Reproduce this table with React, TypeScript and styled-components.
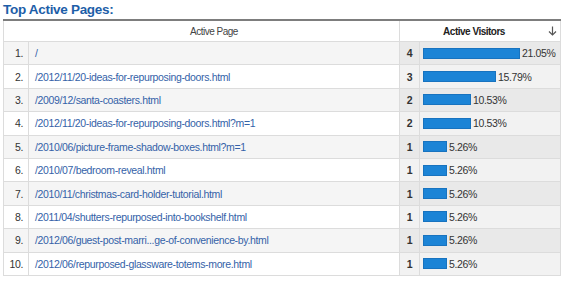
import React from 'react';
import styled, { createGlobalStyle } from 'styled-components';

type PageRow = {
  path: string;
  visitors: number;
  pct: number;
};

const rows: PageRow[] = [
  { path: '/', visitors: 4, pct: 21.05 },
  { path: '/2012/11/20-ideas-for-repurposing-doors.html', visitors: 3, pct: 15.79 },
  { path: '/2009/12/santa-coasters.html', visitors: 2, pct: 10.53 },
  { path: '/2012/11/20-ideas-for-repurposing-doors.html?m=1', visitors: 2, pct: 10.53 },
  { path: '/2010/06/picture-frame-shadow-boxes.html?m=1', visitors: 1, pct: 5.26 },
  { path: '/2010/07/bedroom-reveal.html', visitors: 1, pct: 5.26 },
  { path: '/2010/11/christmas-card-holder-tutorial.html', visitors: 1, pct: 5.26 },
  { path: '/2011/04/shutters-repurposed-into-bookshelf.html', visitors: 1, pct: 5.26 },
  { path: '/2012/06/guest-post-marri...ge-of-convenience-by.html', visitors: 1, pct: 5.26 },
  { path: '/2012/06/repurposed-glassware-totems-more.html', visitors: 1, pct: 5.26 },
];

const GlobalStyle = createGlobalStyle`
  body {
    margin: 0;
    padding: 0 3px;
    background: #fff;
    font-family: "Liberation Sans", Arial, sans-serif;
    color: #333;
  }
`;

const Title = styled.h2`
  margin: 0 0 1px;
  padding-top: 1px;
  font-size: 13.5px;
  line-height: 17px;
  font-weight: bold;
  letter-spacing: -0.3px;
  color: #1d5ea8;
`;

const Table = styled.table`
  width: 557px;
  table-layout: fixed;
  border-collapse: collapse;
  border-top: 2px solid #7d7d7d;
  font-size: 10.5px;
  letter-spacing: -0.35px;
`;

const HeadCell = styled.th<{ $sorted?: boolean }>`
  height: 20px;
  padding: 0;
  font-size: 10px;
  letter-spacing: -0.5px;
  font-weight: ${p => (p.$sorted ? 'bold' : 'normal')};
  color: ${p => (p.$sorted ? '#222' : '#444')};
  background: #fff;
  border: 1px solid #dcdcdc;
  border-top: none;
  text-align: center;
`;

const PageHeadLabel = styled.div`
  padding-left: 25px;
`;

const SortHead = styled.div`
  display: flex;
  align-items: center;
`;

const SortLabel = styled.span`
  flex: 1;
  text-align: center;
`;

const SortArrow = styled.svg`
  width: 9px;
  height: 10px;
  margin-right: 3px;
`;

const Row = styled.tr<{ $odd: boolean }>`
  --page-bg: ${p => (p.$odd ? '#f5f5f5' : '#fff')};
  --metric-bg: ${p => (p.$odd ? '#e9e9e9' : '#f2f2f2')};
`;

const Cell = styled.td`
  height: 22.4px;
  padding: 0;
  border: 1px solid #dcdcdc;
  white-space: nowrap;
  overflow: hidden;
`;

const IndexCell = styled(Cell)`
  background: var(--page-bg);
  text-align: right;
  padding-right: 5px;
  color: #333;
`;

const PathCell = styled(Cell)`
  background: var(--page-bg);
  padding-left: 6px;
  color: #3462a8;
`;

const CountCell = styled(Cell)`
  background: var(--metric-bg);
  text-align: center;
  font-weight: bold;
  color: #333;
`;

const BarCell = styled(Cell)`
  background: var(--metric-bg);
  padding-left: 3px;
`;

const BarWrap = styled.div`
  display: flex;
  align-items: center;
  gap: 2px;
`;

const Bar = styled.div`
  box-sizing: border-box;
  height: 11px;
  background: #1c84d6;
  border: 1px solid #1873bf;
`;

const Pct = styled.span`
  color: #333;
`;

export default function App() {
  return (
    <>
      <GlobalStyle />
      <Title>Top Active Pages:</Title>
      <Table>
        <colgroup>
          <col style={{ width: 25 }} />
          <col style={{ width: 371 }} />
          <col style={{ width: 20 }} />
          <col style={{ width: 141 }} />
        </colgroup>
        <thead>
          <tr>
            <HeadCell colSpan={2}>
              <PageHeadLabel>Active Page</PageHeadLabel>
            </HeadCell>
            <HeadCell colSpan={2} $sorted>
              <SortHead>
                <SortLabel>Active Visitors</SortLabel>
                <SortArrow viewBox="0 0 9 10" fill="none" stroke="#555" strokeWidth="1.2">
                  <path d="M4.5 0.5V9" />
                  <path d="M1 5.5L4.5 9L8 5.5" />
                </SortArrow>
              </SortHead>
            </HeadCell>
          </tr>
        </thead>
        <tbody>
          {rows.map((r, i) => (
            <Row key={i} $odd={i % 2 === 0}>
              <IndexCell>{i + 1}.</IndexCell>
              <PathCell>{r.path}</PathCell>
              <CountCell>{r.visitors}</CountCell>
              <BarCell>
                <BarWrap>
                  <Bar style={{ width: Math.round(r.pct * 4.6) }} />
                  <Pct>{r.pct.toFixed(2)}%</Pct>
                </BarWrap>
              </BarCell>
            </Row>
          ))}
        </tbody>
      </Table>
    </>
  );
}
